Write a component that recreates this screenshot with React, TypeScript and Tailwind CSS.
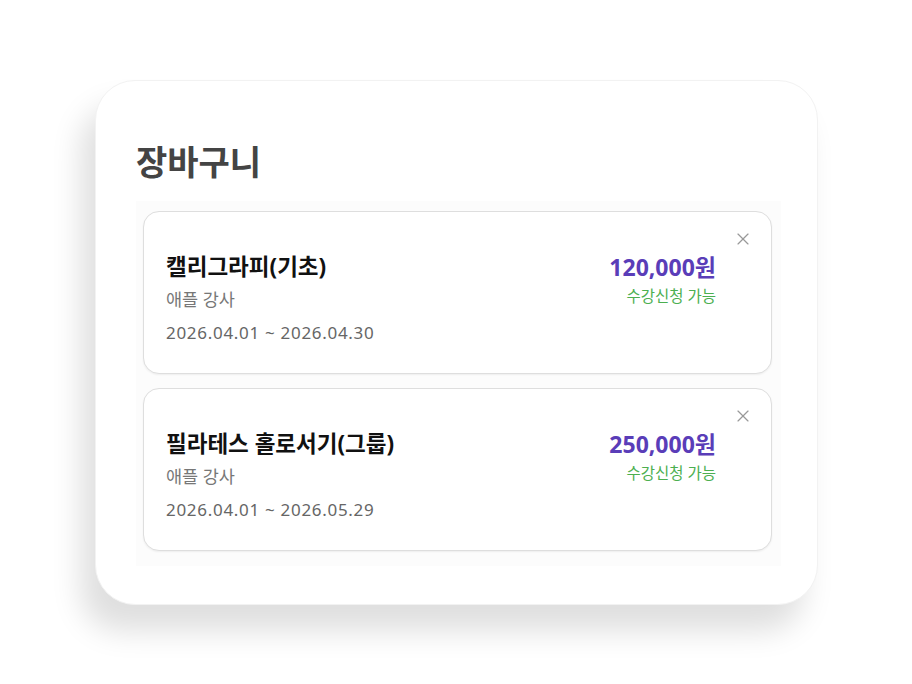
import { X } from 'lucide-react';

type CartItem = {
  id: number;
  title: string;
  teacher: string;
  period: string;
  price: string;
  status: string;
};

const items: CartItem[] = [
  {
    id: 1,
    title: '캘리그라피(기초)',
    teacher: '애플 강사',
    period: '2026.04.01 ~ 2026.04.30',
    price: '120,000원',
    status: '수강신청 가능',
  },
  {
    id: 2,
    title: '필라테스 홀로서기(그룹)',
    teacher: '애플 강사',
    period: '2026.04.01 ~ 2026.05.29',
    price: '250,000원',
    status: '수강신청 가능',
  },
];

export default function App() {
  return (
    <div
      className="min-h-[684px] w-[912px] bg-white pl-[95px] pt-[80px]"
      style={{ fontFamily: '"Noto Sans", "Noto Sans CJK KR", sans-serif' }}
    >
      <div className="w-[723px] rounded-[40px] border border-[#f2f2f2] bg-white pb-[38px] pl-[40px] pr-[36px] pt-[57px] shadow-[-14px_26px_30px_rgba(0,0,0,0.13)]">
        <h1 className="text-[34px] font-bold leading-[48px] text-[#444]">장바구니</h1>

        <div className="mt-[15px] flex flex-col gap-[14px] bg-[#fcfcfc] pb-[15px] pl-[7px] pr-[9px] pt-[10px]">
          {items.map((item) => (
            <div
              key={item.id}
              className="relative flex h-[163px] items-start justify-between rounded-[16px] border border-[#dedede] bg-white pl-[22px] pr-[55px] pt-[39px] shadow-[0_1px_2px_rgba(0,0,0,0.06)]"
            >
              <div className="flex flex-col">
                <h3 className="text-[22.5px] font-bold leading-[32px] text-[#111]">{item.title}</h3>
                <p className="mt-[3px] text-[17.5px] leading-[26px] text-[#777]">{item.teacher}</p>
                <p className="mt-[8px] text-[17px] leading-[26px] tracking-[0.7px] text-[#666]">{item.period}</p>
              </div>
              <div className="flex flex-col items-end">
                <span className="text-[23px] font-bold leading-[32px] text-[#5a3db8]">{item.price}</span>
                <span className="mt-[3px] text-[15.5px] leading-[20px] text-[#4caf50]">{item.status}</span>
              </div>
              <button className="absolute right-[18px] top-[17px] text-[#999]">
                <X className="h-[20px] w-[20px]" strokeWidth={1.4} />
              </button>
            </div>
          ))}
        </div>
      </div>
    </div>
  );
}
